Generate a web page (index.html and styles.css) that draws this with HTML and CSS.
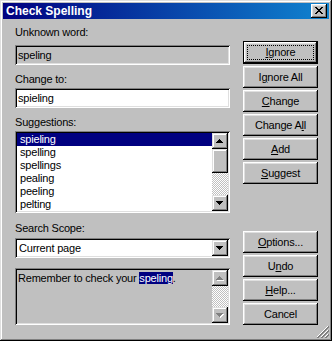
FILE: index.html
```html
<!DOCTYPE html>
<html>
<head>
<meta charset="utf-8">
<title>Check Spelling</title>
<link rel="stylesheet" href="styles.css">
</head>
<body>
<div class="window">
  <div class="titlebar">
    <span class="title">Check Spelling</span>
    <span class="close">
      <svg width="16" height="14" viewBox="0 0 16 14" shape-rendering="crispEdges">
        <path d="M4 3h2v1h-2zM10 3h2v1h-2zM5 4h2v1h-2zM9 4h2v1h-2zM6 5h4v1h-4zM7 6h2v1h-2zM6 7h4v1h-4zM5 8h2v1h-2zM9 8h2v1h-2zM4 9h2v1h-2zM10 9h2v1h-2z" fill="#000"/>
      </svg>
    </span>
  </div>
  <div class="content">
    <div class="left">
      <div class="label l1">Unknown word:</div>
      <div class="field readonly">speling</div>
      <div class="label l2">Change to:</div>
      <div class="field">spieling</div>
      <div class="label l3">Sug<u>g</u>estions:</div>
      <div class="listbox">
        <ul class="items">
          <li class="sel">spieling</li>
          <li>spelling</li>
          <li>spellings</li>
          <li>pealing</li>
          <li>peeling</li>
          <li>pelting</li>
        </ul>
        <div class="vscroll">
          <span class="sbtn">
            <svg width="16" height="16" viewBox="0 0 16 16" shape-rendering="crispEdges"><path d="M7 6h1v1h-1zM6 7h3v1h-3zM5 8h5v1h-5zM4 9h7v1h-7z" fill="#000"/></svg>
          </span>
          <span class="thumb"></span>
          <span class="track"></span>
          <span class="sbtn">
            <svg width="16" height="16" viewBox="0 0 16 16" shape-rendering="crispEdges"><path d="M4 6h7v1h-7zM5 7h5v1h-5zM6 8h3v1h-3zM7 9h1v1h-1z" fill="#000"/></svg>
          </span>
        </div>
      </div>
      <div class="label l4">Search Scope:</div>
      <div class="combo">
        <span class="combo-text">Current page</span>
        <span class="sbtn">
          <svg width="16" height="16" viewBox="0 0 16 16" shape-rendering="crispEdges"><path d="M4 6h7v1h-7zM5 7h5v1h-5zM6 8h3v1h-3zM7 9h1v1h-1z" fill="#000"/></svg>
        </span>
      </div>
      <div class="context">
        <div class="context-text">Remember to check your <span class="hl">speling</span>.</div>
        <div class="vscroll">
          <span class="sbtn">
            <svg width="16" height="16" viewBox="0 0 16 16" shape-rendering="crispEdges"><path d="M8 7h1v1h-1zM7 8h3v1h-3zM6 9h5v1h-5zM5 10h7v1h-7z" fill="#fff"/><path d="M7 6h1v1h-1zM6 7h3v1h-3zM5 8h5v1h-5zM4 9h7v1h-7z" fill="#808080"/></svg>
          </span>
          <span class="track grow"></span>
          <span class="sbtn">
            <svg width="16" height="16" viewBox="0 0 16 16" shape-rendering="crispEdges"><path d="M5 7h7v1h-7zM6 8h5v1h-5zM7 9h3v1h-3zM8 10h1v1h-1z" fill="#fff"/><path d="M4 6h7v1h-7zM5 7h5v1h-5zM6 8h3v1h-3zM7 9h1v1h-1z" fill="#808080"/></svg>
          </span>
        </div>
      </div>
    </div>
    <div class="right">
      <div class="group top">
        <button class="btn default"><span class="focus"><u>I</u>gnore</span></button>
        <button class="btn">I<u>g</u>nore All</button>
        <button class="btn"><u>C</u>hange</button>
        <button class="btn">Change A<u>l</u>l</button>
        <button class="btn"><u>A</u>dd</button>
        <button class="btn"><u>S</u>uggest</button>
      </div>
      <div class="group bottom">
        <button class="btn"><u>O</u>ptions...</button>
        <button class="btn">U<u>n</u>do</button>
        <button class="btn"><u>H</u>elp...</button>
        <button class="btn">Cancel</button>
      </div>
    </div>
  </div>
  <svg class="grip" width="12" height="12" viewBox="0 0 12 12" shape-rendering="crispEdges">
    <g fill="#fff"><rect x="10" y="0" width="1" height="1"/><rect x="9" y="1" width="1" height="1"/><rect x="8" y="2" width="1" height="1"/><rect x="7" y="3" width="1" height="1"/><rect x="6" y="4" width="1" height="1"/><rect x="5" y="5" width="1" height="1"/><rect x="4" y="6" width="1" height="1"/><rect x="3" y="7" width="1" height="1"/><rect x="2" y="8" width="1" height="1"/><rect x="1" y="9" width="1" height="1"/><rect x="0" y="10" width="1" height="1"/>
      <rect x="10" y="4" width="1" height="1"/><rect x="9" y="5" width="1" height="1"/><rect x="8" y="6" width="1" height="1"/><rect x="7" y="7" width="1" height="1"/><rect x="6" y="8" width="1" height="1"/><rect x="5" y="9" width="1" height="1"/><rect x="4" y="10" width="1" height="1"/>
      <rect x="10" y="8" width="1" height="1"/><rect x="9" y="9" width="1" height="1"/><rect x="8" y="10" width="1" height="1"/></g>
    <g fill="#808080"><rect x="11" y="0" width="1" height="2"/><rect x="10" y="1" width="1" height="2"/><rect x="9" y="2" width="1" height="2"/><rect x="8" y="3" width="1" height="2"/><rect x="7" y="4" width="1" height="2"/><rect x="6" y="5" width="1" height="2"/><rect x="5" y="6" width="1" height="2"/><rect x="4" y="7" width="1" height="2"/><rect x="3" y="8" width="1" height="2"/><rect x="2" y="9" width="1" height="2"/><rect x="1" y="10" width="1" height="2"/><rect x="0" y="11" width="1" height="1"/>
      <rect x="11" y="4" width="1" height="2"/><rect x="10" y="5" width="1" height="2"/><rect x="9" y="6" width="1" height="2"/><rect x="8" y="7" width="1" height="2"/><rect x="7" y="8" width="1" height="2"/><rect x="6" y="9" width="1" height="2"/><rect x="5" y="10" width="1" height="2"/><rect x="4" y="11" width="1" height="1"/>
      <rect x="11" y="8" width="1" height="2"/><rect x="10" y="9" width="1" height="2"/><rect x="9" y="10" width="1" height="2"/><rect x="8" y="11" width="1" height="1"/></g>
  </svg>
</div>
</body>
</html>
```

FILE: styles.css
```css
html, body {
  margin: 0;
  padding: 0;
  background: #c0c0c0;
}
body {
  font-family: "Liberation Sans", Arial, sans-serif;
  font-size: 11px;
  letter-spacing: -0.2px;
  color: #000;
}
.window {
  position: relative;
  width: 332px;
  height: 341px;
  box-sizing: border-box;
  padding: 3px;
  background: #c0c0c0;
  box-shadow: inset -1px -1px #000, inset 1px 1px #dfdfdf, inset -2px -2px #808080, inset 2px 2px #fff;
}
.titlebar {
  height: 16px;
  display: flex;
  align-items: center;
  justify-content: space-between;
  background: linear-gradient(to right, #000080, #1084d0);
  padding: 0 2px 0 3px;
}
.title {
  color: #fff;
  font-weight: bold;
  font-size: 12px;
  letter-spacing: 0;
  line-height: 16px;
}
.close {
  display: block;
  width: 16px;
  height: 14px;
  background: #c0c0c0;
  box-shadow: inset -1px -1px #000, inset 1px 1px #fff, inset -2px -2px #808080, inset 2px 2px #dfdfdf;
}
.close svg { display: block; }
.content {
  display: flex;
}
.left {
  margin-left: 12px;
  width: 215px;
  display: flex;
  flex-direction: column;
}
.label {
  line-height: 13px;
  height: 13px;
}
.l1 { margin-top: 7px; }
.l2 { margin-top: 8px; }
.l3 { margin-top: 8px; }
.l4 { margin-top: 9px; }
.field {
  height: 20px;
  box-sizing: border-box;
  padding: 2px 3px;
  line-height: 16px;
  background: #fff;
  box-shadow: inset 1px 1px #808080, inset -1px -1px #fff, inset 2px 2px #000, inset -2px -2px #dfdfdf;
}
.l1 + .field { margin-top: 6px; }
.l2 + .field { margin-top: 2px; }
.field.readonly { background: #c0c0c0; }
.listbox {
  margin-top: 2px;
  height: 82px;
  box-sizing: border-box;
  padding: 2px;
  display: flex;
  background: #fff;
  box-shadow: inset 1px 1px #808080, inset -1px -1px #fff, inset 2px 2px #000, inset -2px -2px #dfdfdf;
}
.items {
  list-style: none;
  margin: 0;
  padding: 0;
  flex: 1;
}
.items li {
  height: 13px;
  line-height: 13px;
  padding-left: 3px;
}
.items li.sel {
  background: #000080;
  color: #fff;
}
.vscroll {
  width: 16px;
  display: flex;
  flex-direction: column;
}
.sbtn {
  display: block;
  width: 16px;
  height: 16px;
  flex: none;
  background: #c0c0c0;
  box-shadow: inset -1px -1px #000, inset 1px 1px #dfdfdf, inset -2px -2px #808080, inset 2px 2px #fff;
}
.sbtn svg { display: block; }
.thumb {
  display: block;
  height: 24px;
  flex: none;
  background: #c0c0c0;
  box-shadow: inset -1px -1px #000, inset 1px 1px #dfdfdf, inset -2px -2px #808080, inset 2px 2px #fff;
}
.track {
  display: block;
  flex: 1;
  background: repeating-conic-gradient(#fff 0 25%, #c0c0c0 0 50%) 0 0 / 2px 2px;
}
.combo {
  margin-top: 3px;
  height: 20px;
  box-sizing: border-box;
  padding: 2px;
  display: flex;
  background: #fff;
  box-shadow: inset 1px 1px #808080, inset -1px -1px #fff, inset 2px 2px #000, inset -2px -2px #dfdfdf;
}
.combo-text {
  flex: 1;
  padding-left: 2px;
  line-height: 16px;
}
.context {
  margin-top: 10px;
  height: 57px;
  box-sizing: border-box;
  padding: 2px;
  display: flex;
  background: #c0c0c0;
  box-shadow: inset 1px 1px #808080, inset -1px -1px #fff, inset 2px 2px #000, inset -2px -2px #dfdfdf;
}
.context-text {
  flex: 1;
  padding: 2px 0 0 1px;
  line-height: 13px;
}
.hl {
  background: #000080;
  color: #fff;
}
.right {
  margin-left: 13px;
  width: 75px;
  display: flex;
  flex-direction: column;
}
.group {
  display: flex;
  flex-direction: column;
  gap: 2px;
}
.group.top { margin-top: 22px; }
.group.bottom { margin-top: 47px; }
.btn {
  width: 75px;
  height: 22px;
  margin: 0;
  padding: 0;
  border: 0;
  font: inherit;
  letter-spacing: inherit;
  color: #000;
  line-height: 20px;
  text-align: center;
  background: #c0c0c0;
  box-shadow: inset -1px -1px #000, inset 1px 1px #fff, inset -2px -2px #808080, inset 2px 2px #dfdfdf;
}
.btn.default {
  height: 23px;
  box-shadow: inset 0 0 0 1px #000, inset -2px -2px #000, inset 2px 2px #fff, inset -3px -3px #808080, inset 3px 3px #dfdfdf;
  display: flex;
  padding: 4px;
  box-sizing: border-box;
}
.focus {
  flex: 1;
  border: 1px dotted #000;
  line-height: 13px;
}
.grip {
  position: absolute;
  right: 3px;
  bottom: 3px;
  display: block;
}
```
